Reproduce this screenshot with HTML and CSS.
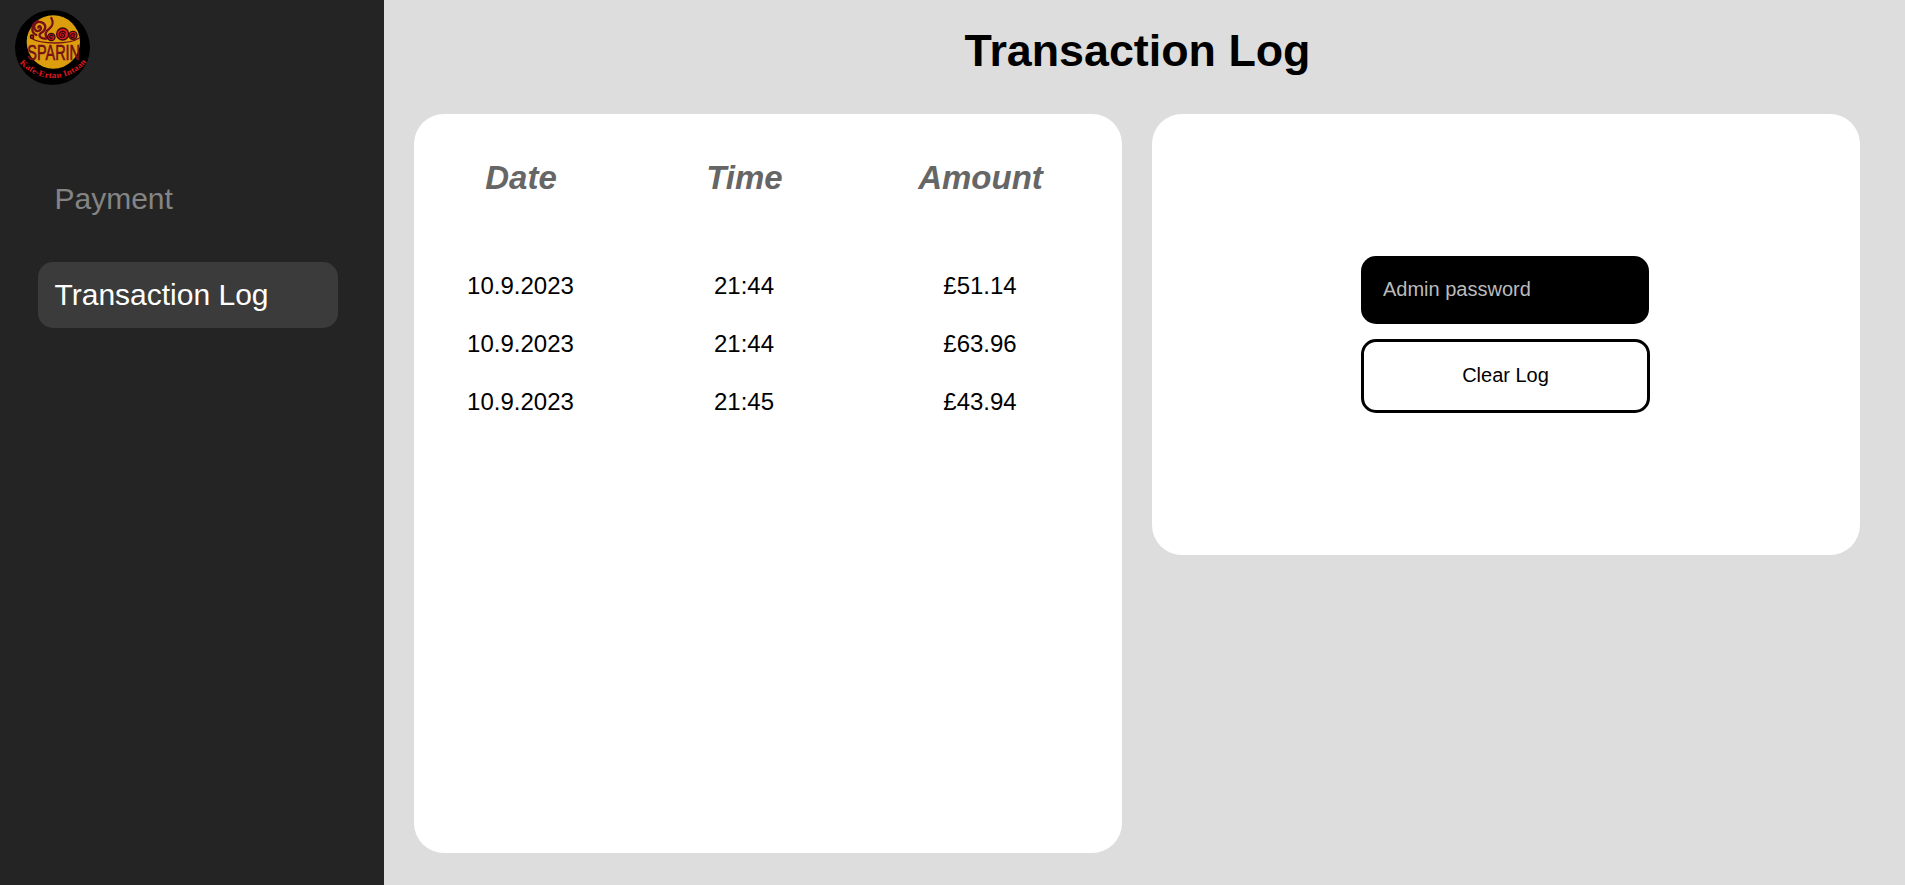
FILE: index.html
```html
<!DOCTYPE html>
<html lang="en">
<head>
<meta charset="utf-8">
<title>Transaction Log</title>
<link rel="stylesheet" href="styles.css">
</head>
<body>
<aside class="sidebar">
  <svg class="logo" viewBox="0 0 225 225" role="img" aria-label="Sparin">
    <defs><path id="arc" d="M20 152C70 208 158 212 209 148"/></defs>
    <circle cx="112.500" cy="112.500" r="112.500" fill="#000"/>
    <circle cx="115" cy="96" r="80" fill="#dd9e0e"/>
    <g fill="none" stroke="#741019" stroke-linecap="round">
      <path stroke-width="7" d="M94 86C76 86 67 76 79 68C94 60 95 43 80 37C65 32 53 45 59 57C65 69 82 61 77 51C74 46 69 49 70 53M98 84C88 75 91 64 102 57C113 49 116 36 109 24M64 75C46 67 49 42 68 33"/>
      <path stroke-width="4" d="M47 84C78 104 163 104 193 84M47 79L56 84M91 78L109 89"/>
    </g>
    <g fill="#e01822" stroke="#380d0c" stroke-width="4">
      <circle cx="51" cy="80" r="5"/>
      <circle cx="109" cy="81" r="11"/>
      <circle cx="143" cy="72" r="18"/>
      <circle cx="174" cy="76" r="12"/>
    </g>
    <g fill="none" stroke="#380d0c" stroke-width="4">
      <path d="M115 80Q109 70 104 80Q106 89 112 83M152 70C146 56 128 67 134 78C144 89 155 76 145 70C140 68 137 76 143 77M180 74C173 65 163 77 170 83C180 84 179 74 173 77"/>
    </g>
    <text class="logo-name" x="37" y="149" textLength="158" lengthAdjust="spacingAndGlyphs">SPARIN</text>
    <text class="logo-motto"><textPath href="#arc" textLength="214" lengthAdjust="spacingAndGlyphs">Kafe-Ertan Intaan</textPath></text>
  </svg>
  <nav class="nav">
    <a class="nav-item">Payment</a>
    <a class="nav-item active">Transaction Log</a>
  </nav>
</aside>
<main class="main">
  <h1 class="title">Transaction Log</h1>
  <div class="panels">
    <section class="card log">
      <table class="table">
        <colgroup><col class="col-date"><col class="col-time"><col class="col-amount"></colgroup>
        <thead><tr><th>Date</th><th>Time</th><th>Amount</th></tr></thead>
        <tbody>
          <tr><td>10.9.2023</td><td>21:44</td><td>£51.14</td></tr>
          <tr><td>10.9.2023</td><td>21:44</td><td>£63.96</td></tr>
          <tr><td>10.9.2023</td><td>21:45</td><td>£43.94</td></tr>
        </tbody>
      </table>
    </section>
    <section class="card admin">
      <form class="form">
        <input class="password" type="password" placeholder="Admin password">
        <button class="clear" type="button">Clear Log</button>
      </form>
    </section>
  </div>
</main>
</body>
</html>
```
FILE: styles.css
```css
* { box-sizing: border-box; }

body {
  margin: 0;
  height: 100vh;
  display: flex;
  overflow: hidden;
  background: #ddd;
  color: #000;
  font-family: "Liberation Sans", Arial, sans-serif;
}

.sidebar {
  width: 384px;
  flex: none;
  padding: 10px 15px;
  background: #242424;
}

.logo { display: block; width: 75px; height: 75px; overflow: visible; }
.logo-name { font-size: 64px; fill: #741019; stroke: #741019; stroke-width: 2px; }
.logo-motto { font-family: "Liberation Serif", serif; font-size: 25px; font-weight: bold; fill: #e01822; dominant-baseline: central; }

.nav {
  display: flex;
  flex-direction: column;
  gap: 30px;
  width: 300px;
  margin: 81px 0 0 23px;
}

.nav-item {
  height: 66px;
  padding: 0 16.5px;
  border-radius: 15px;
  line-height: 66px;
  font-size: 30px;
  color: #848484;
}

.nav-item.active { background: #3b3b3b; color: #fff; }

.main { flex: 1; padding: 0 45px 0 30px; }

.title {
  height: 114px;
  margin: 0;
  padding: 24px 0 0 1px;
  text-align: center;
  font-size: 44.8px;
  line-height: 52px;
}

.panels {
  display: grid;
  grid-template-columns: 1fr 1fr;
  gap: 30px;
  align-items: start;
}

.card { border-radius: 30px; background: #fff; }
.log { height: 739px; padding-top: 31px; }
.admin { height: 441px; padding: 142px 0 0 209px; }

.table {
  table-layout: fixed;
  width: 685px;
  border-collapse: collapse;
  text-align: center;
  font-size: 24px;
}

.col-date { width: 213px; }
.col-time { width: 234px; }
.col-amount { width: 238px; }

.table th {
  height: 112px;
  padding: 13px 0 0 1px;
  vertical-align: top;
  color: #666;
  font-size: 33px;
  font-style: italic;
  line-height: 40px;
}

.table td { height: 58px; padding: 0; }

.form { display: flex; flex-direction: column; gap: 15px; width: 289px; }

.password {
  width: 288px;
  height: 68px;
  padding: 0 22px 2px;
  border: 0;
  border-radius: 15px;
  background: #000;
  color: #fff;
  font: 20px "Liberation Sans", Arial, sans-serif;
}

.password::placeholder { color: #bbb; }

.clear {
  height: 74px;
  padding: 0 0 2px;
  border: 3px solid #000;
  border-radius: 15px;
  background: #fff;
  color: #000;
  font: 20px "Liberation Sans", Arial, sans-serif;
}
```
